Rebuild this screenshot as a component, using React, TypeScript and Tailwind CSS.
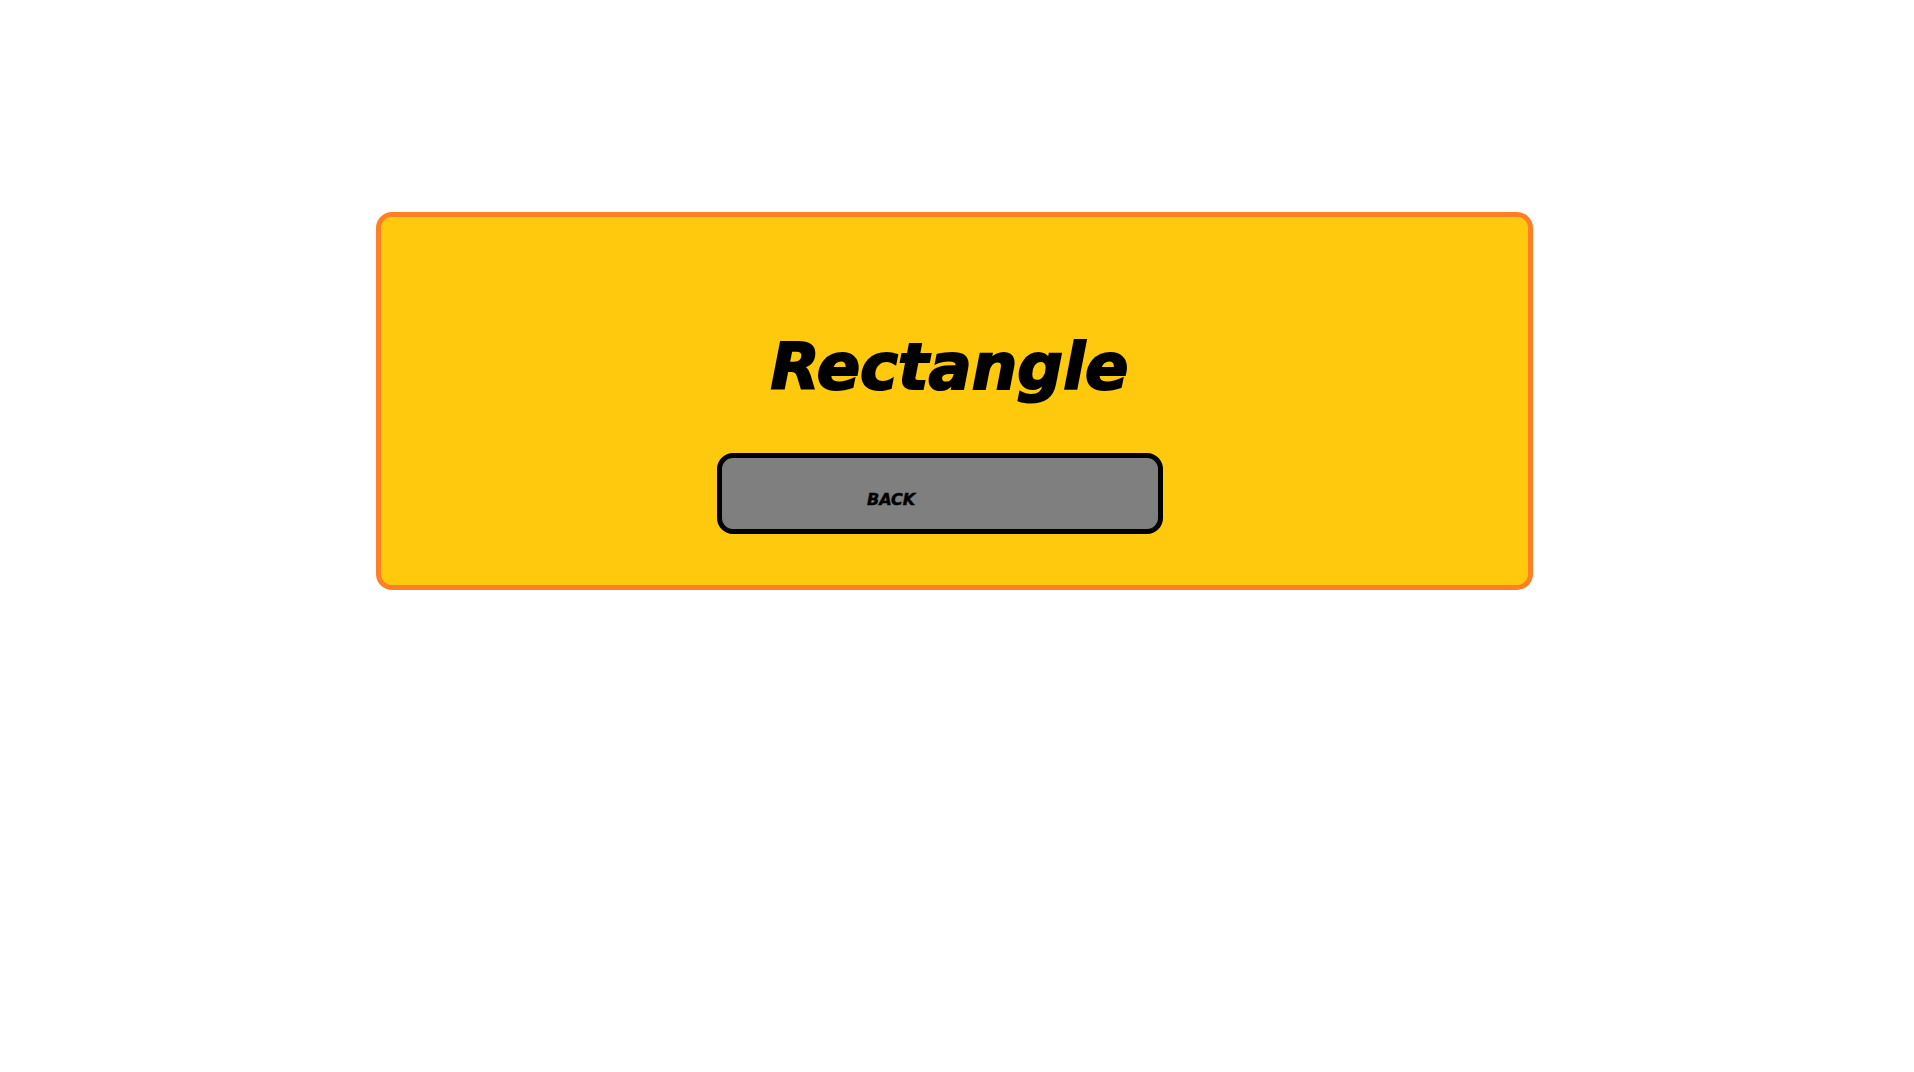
export default function App() {
  return (
    <div className="min-h-screen w-full bg-white pt-[212px] pl-[376px]">
      <div className="flex h-[378px] w-[1157px] flex-col rounded-[16px] border-[5px] border-[#ff7f27] bg-[#ffc90e]">
        <h1 className="mt-[118px] pr-[10px] text-center font-['DejaVu_Sans',sans-serif] text-[64px] font-bold italic leading-none text-black [-webkit-text-stroke:2px_black]">
          Rectangle
        </h1>
        <button className="ml-[336px] mt-[54px] flex h-[81px] w-[446px] items-start rounded-[16px] border-[5px] border-black bg-[#7f7f7f] pl-[145px] pt-[34px]">
          <span className="font-['DejaVu_Sans',sans-serif] text-[16px] font-bold italic leading-none text-black [-webkit-text-stroke:0.5px_black]">
            BACK
          </span>
        </button>
      </div>
    </div>
  );
}
